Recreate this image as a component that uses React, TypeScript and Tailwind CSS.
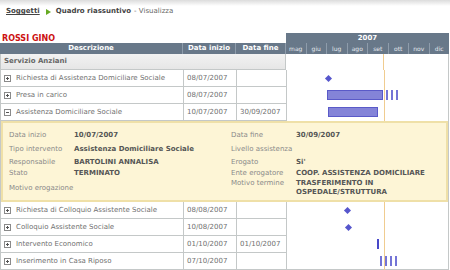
import React from 'react';

const months = ['mag', 'giu', 'lug', 'ago', 'set', 'ott', 'nov', 'dic'];

type Mark =
  | { kind: 'diamond'; x: number }
  | { kind: 'bar'; x: number; w: number; stripes?: number }
  | { kind: 'tick'; x: number }
  | { kind: 'stripes'; x: number; n: number };

type Row = { desc: string; start: string; end?: string; open?: boolean; mark: Mark };

const topRows: Row[] = [
  { desc: 'Richiesta di Assistenza Domiciliare Sociale', start: '08/07/2007', mark: { kind: 'diamond', x: 39 } },
  { desc: 'Presa in carico', start: '08/07/2007', mark: { kind: 'bar', x: 40, w: 56, stripes: 3 } },
  { desc: 'Assistenza Domiciliare Sociale', start: '10/07/2007', end: '30/09/2007', open: true, mark: { kind: 'bar', x: 41, w: 50 } },
];

const bottomRows: Row[] = [
  { desc: 'Richiesta di Colloquio Assistente Sociale', start: '08/08/2007', mark: { kind: 'diamond', x: 58 } },
  { desc: 'Colloquio Assistente Sociale', start: '10/08/2007', mark: { kind: 'diamond', x: 59 } },
  { desc: 'Intervento Economico', start: '01/10/2007', end: '01/10/2007', mark: { kind: 'tick', x: 90 } },
  { desc: 'Inserimento in Casa Riposo', start: '07/10/2007', mark: { kind: 'stripes', x: 93, n: 4 } },
];

const Toggle = ({ open }: { open?: boolean }) => (
  <svg width="7" height="7" viewBox="0 0 7 7" className="shrink-0">
    <rect x="0.5" y="0.5" width="6" height="6" fill="#fff" stroke="#8a8a8a" />
    <line x1="2" y1="3.5" x2="5" y2="3.5" stroke="#555" />
    {!open && <line x1="3.5" y1="2" x2="3.5" y2="5" stroke="#555" />}
  </svg>
);

const Stripes = ({ x, n }: { x: number; n: number }) => (
  <>
    {Array.from({ length: n }).map((_, i) => (
      <div key={i} className="absolute top-[3px] h-[10px] w-[2px] bg-[#7474d6]" style={{ left: x + i * 5 }} />
    ))}
  </>
);

const GanttMark = ({ mark }: { mark: Mark }) => {
  if (mark.kind === 'diamond')
    return <div className="absolute top-[6px] h-[5px] w-[5px] rotate-45 bg-[#5656cc]" style={{ left: mark.x }} />;
  if (mark.kind === 'tick')
    return <div className="absolute top-[3px] h-[10px] w-[2px] bg-[#4848c8]" style={{ left: mark.x }} />;
  if (mark.kind === 'stripes') return <Stripes x={mark.x} n={mark.n} />;
  return (
    <>
      <div className="absolute top-[3px] h-[10px] border border-[#5a5ac8] bg-[#8484d8]" style={{ left: mark.x, width: mark.w }} />
      {mark.stripes && <Stripes x={mark.x + mark.w + 3} n={mark.stripes} />}
    </>
  );
};

const Today = () => <div className="absolute top-0 bottom-0 left-[97px] w-px bg-[#f0cc90]" />;

const DataRow = ({ row }: { row: Row }) => (
  <div className="flex h-[17px] text-[#707070]">
    <div className="flex w-[183px] items-center gap-[5px] border-r border-b border-[#c4c8c8] pl-[3px]">
      <Toggle open={row.open} />
      <span>{row.desc}</span>
    </div>
    <div className="flex w-[53px] items-center border-r border-b border-[#c4c8c8] pl-[3px]">{row.start}</div>
    <div className="flex w-[50px] items-center border-r border-b border-[#c4c8c8] pl-[3px]">{row.end}</div>
    <div className="relative flex-1">
      <Today />
      <GanttMark mark={row.mark} />
    </div>
  </div>
);

const Field = ({ label, value, h, tall }: { label: string; value?: React.ReactNode; h: string; tall?: boolean }) => (
  <div className={`flex ${h} ${tall ? 'items-start pt-[1px] leading-[9px]' : 'items-center'}`}>
    <div className="w-[65px] shrink-0 text-[#8a8a8a]">{label}</div>
    <div className="font-bold leading-[9px] text-[#555]">{value}</div>
  </div>
);

const Detail = () => (
  <div className="flex border-2 border-[#efe0a8] bg-[#fdf5d6] pl-[6px] pt-[5px] pb-[1px]">
    <div className="w-[222px]">
      <Field h="h-[14px]" label="Data inizio" value="10/07/2007" />
      <Field h="h-[14px]" label="Tipo intervento" value="Assistenza Domiciliare Sociale" />
      <Field h="h-[12px]" label="Responsabile" value="BARTOLINI ANNALISA" />
      <Field h="h-[10px]" label="Stato" value="TERMINATO" />
      <Field h="h-[21px]" label="Motivo erogazione" />
    </div>
    <div>
      <Field h="h-[14px]" label="Data fine" value="30/09/2007" />
      <Field h="h-[14px]" label="Livello assistenza" />
      <Field h="h-[12px]" label="Erogato" value="Si'" />
      <Field h="h-[10px]" label="Ente erogatore" value="COOP. ASSISTENZA DOMICILIARE" />
      <Field h="h-[21px]" tall label="Motivo termine" value={<>TRASFERIMENTO IN<br />OSPEDALE/STRUTTURA</>} />
    </div>
  </div>
);

export default function App() {
  return (
    <div className="h-[270px] w-[450px] overflow-hidden bg-white text-[7px]" style={{ fontFamily: '"DejaVu Sans", Verdana, sans-serif' }}>
      <div className="h-[6px] bg-gradient-to-b from-[#dcdcdc] to-white" />
      <div className="flex h-[11px] items-center pl-[6px] text-[#444]">
        <span className="font-bold underline">Soggetti</span>
        <svg width="5" height="6" viewBox="0 0 5 6" className="ml-[6px] mr-[5px]">
          <polygon points="0,0 5,3 0,6" fill="#66aa22" />
        </svg>
        <span className="font-bold">Quadro riassuntivo</span>
        <span className="ml-[3px] text-[#666]">- Visualizza</span>
      </div>
      <div className="mt-[16px] w-[449px]">
        <div className="flex h-[10px]">
          <div className="flex w-[286px] items-end pl-[2px] text-[8px] font-bold leading-none text-[#cc1111]">ROSSI GINO</div>
          <div className="flex flex-1 items-center justify-center bg-[#687889] font-bold text-white">2007</div>
        </div>
        <div className="flex h-[11px] bg-[#687889] font-bold text-white">
          <div className="flex w-[183px] items-center justify-center border-r border-[#8e9cab]">Descrizione</div>
          <div className="flex w-[53px] items-center justify-center border-r border-[#8e9cab]">Data inizio</div>
          <div className="flex w-[50px] items-center justify-center border-r border-[#8e9cab]">Data fine</div>
          {months.map((m) => (
            <div key={m} className="flex flex-1 items-center justify-center border-r border-[#8e9cab] text-[6px] font-normal text-[#e4e8ee] last:border-r-0">
              {m}
            </div>
          ))}
        </div>
        <div className="border-x border-b border-[#c4c8c8]">
          <div className="flex h-[16px]">
            <div className="flex w-[285px] items-center border-r border-b border-[#c4c8c8] bg-gradient-to-b from-[#f2f2f2] to-[#e6e6e6] pl-[3px] font-bold text-[#666]">
              Servizio Anziani
            </div>
            <div className="relative flex-1">
              <Today />
            </div>
          </div>
          {topRows.map((r) => (
            <DataRow key={r.desc} row={r} />
          ))}
          <Detail />
          {bottomRows.map((r, i) => (
            <div key={r.desc} className={i === bottomRows.length - 1 ? '-mb-px' : ''}>
              <DataRow row={r} />
            </div>
          ))}
        </div>
      </div>
    </div>
  );
}
